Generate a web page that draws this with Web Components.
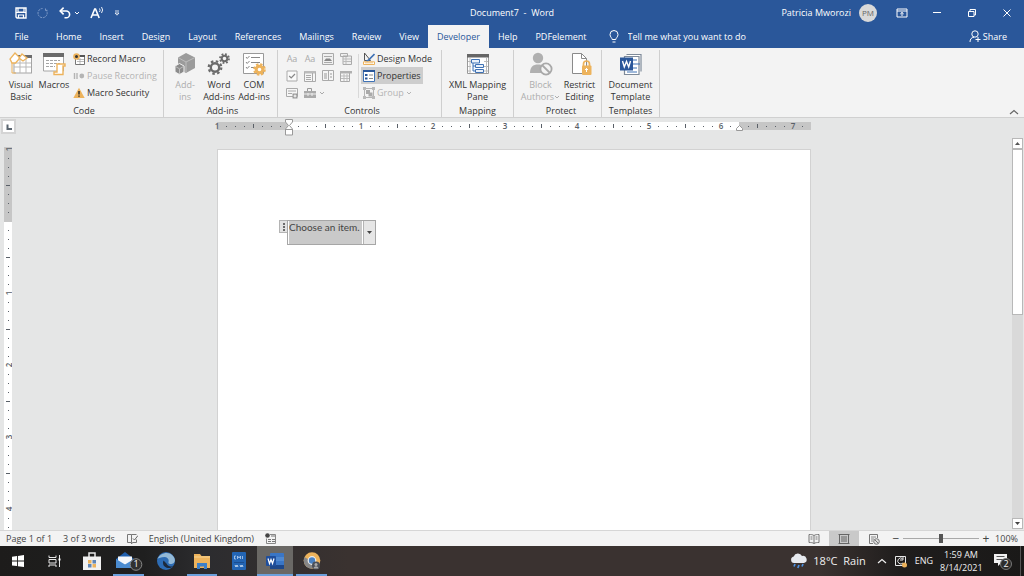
<!DOCTYPE html>
<html lang="en">
<head>
<meta charset="utf-8">
<title>Document7 - Word</title>
<style>
  html, body { height: 100%; }
  body { margin: 0; overflow: hidden; font: 9px/12px "Open Sans", "Noto Sans", sans-serif; color: #333; }
</style>
</head>
<body>
<word-app></word-app>

<script>
const O = '#edb35c', B = '#2b579a', G = '#6b6b6b', L = '#b4b4b4', M = '#3f72b5';
const ICONS = {
  save: ['0 0 12 12', `<path d="M1 1h10v10H2L1 10z" fill="none" stroke="#fff" stroke-width="1.4"/><path d="M3 1v4h6V1M3.5 11V8h5v3" fill="none" stroke="#fff" stroke-width="1.2"/><path d="M1 5.5h10" stroke="#fff"/>`],
  redo: ['0 0 12 12', `<path d="M8.500 3.500V1M8.500 3.300H11M8.800 2.800A4.600 4.600 0 1 1 5.500 1.500" fill="none" stroke="#7f9bc8" stroke-dasharray="2 .8"/>`],
  undo: ['0 0 12 12', `<path d="M1 4h6.2a3.4 3.4 0 0 1 0 6.8H5.5" fill="none" stroke="#fff" stroke-width="1.6"/><path d="M4.6.6L1.2 4l3.4 3.4" fill="none" stroke="#fff" stroke-width="1.6"/>`],
  caret: ['0 0 6 6', `<path d="M1 2l2 2 2-2" fill="none" stroke="currentColor"/>`],
  readaloud: ['0 0 14 13', `<path d="M1 12L4.7 3h.8L9.2 12M2.5 9h5" fill="none" stroke="#fff" stroke-width="1.6"/><path d="M9.5 2.5a3 3 0 0 1 0 3.5M11.5 1a5 5 0 0 1 0 6" fill="none" stroke="#fff" stroke-width=".9"/>`],
  customise: ['0 0 6 6', `<path d="M1 1h4M1 3h4L3 5.2z" stroke="#fff" stroke-width=".8" fill="none"/>`],
  ribbonopts: ['0 0 12 10', `<path d="M1 1h10v8H1zM1 3h10M6 8V4.5M4.3 6L6 4.4 7.700 6" fill="none" stroke="#fff"/>`],
  minimise: ['0 0 10 10', `<path d="M1 4.500h8" stroke="#fff"/>`],
  restore: ['0 0 10 10', `<path d="M1.5 3.500h5.500v5H1.500zM3 3.500v-2h5.500v5.500H7" fill="none" stroke="#fff"/>`],
  close: ['0 0 10 10', `<path d="M1.500 1.500l7 7M8.500 1.500l-7 7" stroke="#fff"/>`],
  bulb: ['0 0 10 13', `<path d="M3.200 9.500C3.200 8 1 7 1 4.500a4 4 0 0 1 8 0C9 7 6.800 8 6.800 9.500zM3.500 12h3" fill="none" stroke="#fff"/>`],
  share: ['0 0 12 13', `<circle cx="6" cy="4" r="3.200" fill="none" stroke="#fff"/><path d="M1 12c0-3 1.500-4.500 4-4.800M9 7v5M6.500 9.500h5" fill="none" stroke="#fff"/>`],
  vb: ['0 0 24 24', `<rect x="5" y="4" width="17.500" height="17" fill="#fff" stroke="#a5a5a5"/><path d="M5 3h18v3H5z" fill="${G}"/><path d="M5 11h17M5 15h17M11 6v15M17 6v15" stroke="#b9b9b9"/><path d="M6 1l5 5-4.500 5H3L1 7z" fill="#fff" stroke="${O}" stroke-width="1.300"/><path d="M13 2l5 4-4 3-4-3z" fill="#fff" stroke="${O}" stroke-width="1.300"/><path d="M3 11v10h4" fill="none" stroke="${O}"/>`],
  macros: ['0 0 24 24', `<path d="M1.500 2.500h20V19h-20z" fill="#fff" stroke="#a5a5a5"/><path d="M1 1h21v4H1z" fill="${G}"/><path d="M4 8.500h14M4 11.500h14M4 14.500h9" stroke="#a5a5a5" stroke-dasharray="3 1"/><path d="M15 12h8v2h-2v8.500h-9V20h3z" fill="#fff" stroke="${O}" stroke-width="1.400"/>`],
  record: ['0 0 12 12', `<path d="M2.500 2.500h9v9h-9z" fill="#fff" stroke="#777"/><path d="M6 2h6v2H6z" fill="#555"/><path d="M4 6.500h7M4 8.500h7M7 5v6" stroke="#aaa" stroke-width=".8"/><circle cx="3.500" cy="3.500" r="3.300" fill="${O}"/><circle cx="3.500" cy="3.500" r="1.500" fill="#333"/>`],
  pause: ['0 0 12 12', `<path d="M1.500 3v6M4 3v6" stroke="${L}" stroke-width="1.400"/><circle cx="8.800" cy="6" r="2.400" fill="${L}"/>`],
  warn: ['0 0 12 12', `<path d="M6 .8L11.700 11H.3z" fill="${O}"/><path d="M6 4v3.500M6 8.500v1.300" stroke="#222" stroke-width="1.400"/>`],
  addins: ['0 0 24 24', `<path d="M13 1l9 4.500v10.500L13 21l-8-4.500V5.500z" fill="#9b9b9b"/><path d="M5 5.500l8 4.500 9-4.500M13 10v10" stroke="#bdbdbd" fill="none"/><path d="M6.500 11.500l4.500 2.500v6L6.500 22.500 2 20v-6z" fill="#8b8b8b" stroke="#f3f3f3"/><path d="M2.500 14.500l4 2.300 4-2.300M6.500 17V22" stroke="#bdbdbd" fill="none"/>`],
  gears: ['0 0 24 24', `<g fill="none" stroke="${G}"><circle cx="8" cy="15.500" r="4.200" stroke-width="2.400"/><circle cx="8" cy="15.500" r="6.300" stroke-width="2.200" stroke-dasharray="2.500 2.448"/><circle cx="17.500" cy="6.500" r="2.800" stroke-width="2"/><circle cx="17.500" cy="6.500" r="4.500" stroke-width="1.800" stroke-dasharray="1.800 1.734"/></g>`],
  com: ['0 0 24 24', `<path d="M1.500 1.500h20v20h-20z" fill="#fff" stroke="#999"/><path d="M9 5.500h9M9 10.500h9M9 15.500h5" stroke="#888"/><path d="M4 5l1.200 1.500L7.500 4M4 10l1.200 1.500L7.500 9M4 15l1.200 1.500L7.500 14" fill="none" stroke="#888"/><circle cx="17.500" cy="17.500" r="3.300" fill="none" stroke="${O}" stroke-width="3"/><circle cx="17.500" cy="17.500" r="5.200" fill="none" stroke="${O}" stroke-width="2.200" stroke-dasharray="2.400 1.684"/>`],
  picture: ['0 0 12 12', `<path d="M.5.500h11v11H.5z" fill="#f0f0f0" stroke="#aaa"/><path d="M2 3.500h8" stroke="#aaa"/><path d="M2 8l2-2.500h4L10 8z" fill="#888"/><path d="M2 9.500h8" stroke="#aaa"/>`],
  block: ['0 0 12 12', `<path d="M.5.500h7v3h-7zM3 3h8.500v8.500H3z" fill="#eee" stroke="#aaa"/><path d="M3 6h8M3 8.500h8M6 4v7" stroke="#bbb"/>`],
  check: ['0 0 12 12', `<path d="M1 1h10v10H1z" fill="#fafafa" stroke="#aaa"/><path d="M3.200 6l2 2 3.800-4" fill="none" stroke="#888" stroke-width="1.200"/>`],
  combo: ['0 0 12 12', `<path d="M.5 1.500h11v10H.5z" fill="#f6f6f6" stroke="#aaa"/><path d="M.5 1h11v2.500H.5z" fill="#bbb"/><path d="M2 5.500h5M2 7.500h5M2 9.500h5M8.500 3v8" stroke="#aaa"/>`],
  list: ['0 0 12 12', `<path d="M.5.500h11v10H.5zM6.500 1v10" fill="#f6f6f6" stroke="#aaa"/><path d="M2 4h3M2 6h3M2 8h3M8 4h2M8 7h2" stroke="#999"/>`],
  date: ['0 0 12 12', `<path d="M.5 2.500h9v9h-9z" fill="#f6f6f6" stroke="#aaa"/><path d="M0 1h12v2.500H0z" fill="#b0b0b0"/><path d="M1 6h8M1 8.500h8M4 4v7M7 4v7" stroke="#bbb"/>`],
  repeat: ['0 0 12 12', `<path d="M.5 1.500h11v8H.5z" fill="#f6f6f6" stroke="#aaa"/><path d="M2 4h8M2 6.500h4" stroke="#aaa"/><path d="M6.500 6.500h5v5h-5z" fill="#999"/><path d="M9 7.500v3M7.500 9h3" stroke="#fff"/>`],
  legacy: ['0 0 12 12', `<path d="M0 4h12v7H0z" fill="#aaa"/><path d="M3.500 4V1.500h4V4" fill="none" stroke="#999"/><path d="M0 7h12M4 6v3M8 6v3" stroke="#eee"/>`],
  design: ['0 0 12 12', `<path d="M1.500 0v7.500h6z" fill="none" stroke="#555"/><path d="M11.500 1L5 7.500l-1.500.8" stroke="${M}" stroke-width="1.600" fill="none"/><path d="M.5 8.800h11v2.700H.500z" fill="#fff" stroke="${O}"/><path d="M3 9v1.500M5 9v1.500M7 9v1.500M9 9v1.500" stroke="${O}"/>`],
  props: ['0 0 12 12', `<path d="M.5.500h11v11H.500z" fill="#fff" stroke="${M}"/><path d="M0 1h12" stroke="#2b579a" stroke-width="2"/><path d="M2 5h2.500M2 8.500h2.500" stroke="${B}" stroke-width="2"/><path d="M6 5h4M6 8.500h4" stroke="#888"/>`],
  group: ['0 0 12 12', `<path d="M1.500 1.500h9v9h-9z" fill="none" stroke="${L}"/><path d="M3 3h4v4H3zM5.500 5.500h4v4h-4z" fill="#aaa"/><path d="M0 0h3v3H0zM9 0h3v3H9zM0 9h3v3H0zM9 9h3v3H9z" fill="#b9b9b9"/>`],
  xml: ['0 0 24 24', `<path d="M1.500 3.500h21v18h-21z" fill="#fff" stroke="#9a9a9a"/><path d="M1 2h22v3.500H1z" fill="#666"/><path d="M18 9.500h4M18 14.500h4M18 19h4M2 9.500h3M2 14.500h3M2 19h3M4 6v15M20.500 6v15" stroke="#bbb"/><path d="M5.500 7.500h8v3.500h-8zM9.500 12.500h8v3h-8zM9.500 17.500h8v3h-8zM7 11v8h2.500M7 14h2.500" fill="#eaf1fa" stroke="${M}"/>`],
  authors: ['0 0 24 24', `<circle cx="9" cy="6" r="5.200" fill="#b0b0b0"/><path d="M1 21c0-6 3-8.500 8-8.500S17 15 17 21z" fill="#b0b0b0"/><circle cx="17" cy="17" r="5.600" fill="#f3f3f3" stroke="#a8a8a8" stroke-width="1.800"/><path d="M13 13l8 8" stroke="#a8a8a8" stroke-width="1.800"/>`],
  restrict: ['0 0 24 24', `<path d="M4.500 1.500h9l5 5v15h-14z" fill="#fff" stroke="#8a8a8a"/><path d="M13.500 1.500v5h5" fill="none" stroke="#8a8a8a"/><path d="M15.500 14v-2a3 3 0 0 1 6 0v2" fill="none" stroke="${O}" stroke-width="1.700"/><rect x="14" y="13.500" width="9.500" height="9.500" rx="1" fill="${O}"/><path d="M18.500 16v4M17 17.500h3" stroke="#fff"/>`],
  template: ['0 0 24 24', `<path d="M7.500 2.500H22v17M5.500 4.500H20v18H5.500z" fill="#fff" stroke="#7e8a99" stroke-width="1.200"/><path d="M14 8h4M14 12h7M14 16h4M8 20h10" stroke="${M}" stroke-width="1.200"/><path d="M1 5.500h13v13H1z" fill="${B}"/><path d="M3.500 9l1.800 6L7.500 9.500 9.700 15l1.800-6" fill="none" stroke="#fff" stroke-width="1.400"/>`],
  chevup: ['0 0 10 6', `<path d="M1 5l4-3.500L9 5" fill="none" stroke="currentColor" stroke-width="1.200"/>`],
  tab: ['0 0 12 12', `<path d="M4.500 3.500v4.500H9" fill="none" stroke="#5b6670" stroke-width="2"/>`],
  up: ['0 0 7 5', `<path d="M1 4l2.500-3L6 4z" fill="#555"/>`],
  down: ['0 0 7 5', `<path d="M1 1l2.500 3L6 1z" fill="#444"/>`],
  dots: ['0 0 4 10', `<path d="M1 1h2v2H1zM1 4h2v2H1zM1 7h2v2H1z" fill="#6b6b6b"/>`],
  proof: ['0 0 12 12', `<path d="M5.500 1.500h-4v8h4v1.500l1-1.500h4v-3M5.500 1.500v8M5.500 1.500h5" fill="none" stroke="#777"/><path d="M7 5.500l1.500 1.500L12 2.500" fill="none" stroke="#666"/>`],
  macrec: ['0 0 12 12', `<path d="M5 1.500h5.500v9h-9V5.500" fill="none" stroke="#888"/><path d="M6 3h4M3 6.500h3M7 6.500h3M3 8.500h3M7 8.500h3" stroke="#777"/><circle cx="2.500" cy="2.500" r="2.300" fill="#444"/>`],
  read: ['0 0 12 12', `<path d="M6 2.500C4.500 1.500 3 1.500 1 1.500v8c2 0 3.500 0 5 1 1.500-1 3-1 5-1v-8c-2 0-3.500 0-5 1zM6 2.500v8M2.500 4h2M2.500 6h2M7.500 4h2M7.500 6h2" fill="none" stroke="#777"/>`],
  print: ['0 0 12 12', `<path d="M.5 1.500h11M.5 10.500h11M1.500 1v10M10.500 1v10" stroke="#666"/><path d="M3 4h6M3 6h6M3 8h6" stroke="#666"/>`],
  web: ['0 0 12 12', `<path d="M9.500 5V1.500h-8v9H5" fill="none" stroke="#777"/><path d="M3 4h5M3 6h3M3 8h2" stroke="#888"/><circle cx="8.500" cy="8.500" r="2.800" fill="#ddd" stroke="#777"/><path d="M7 7l3 3" stroke="#777"/>`],
  windows: ['0 0 14 14', `<path d="M1 2.700l5-.7v4.600H1zM6.900 1.900L13 1v5.600H6.900zM1 7.500h5v4.600l-5-.7zM6.900 7.500H13V13l-6.100-.8z" fill="#fff"/>`],
  taskview: ['0 0 14 14', `<path d="M1 1.500v2h7v-2M1 5.500h7v3.500H1zM1 13v-2h7v2" fill="none" stroke="#e8e8e8"/><path d="M11.500 1v12" stroke="#e8e8e8"/><path d="M10.500 4.500h2v2h-2z" fill="#fff"/>`],
  store: ['0 0 20 20', `<path d="M7 6V2h6v4" fill="none" stroke="#e8e8e8" stroke-width="1.500"/><path d="M1 5.500h18V19H1z" fill="#f1f1f1"/><path d="M6 9h3.500v3.500H6zM10.500 13h3.500v3.500h-3.500z" fill="${O}"/><path d="M10.500 9H14v3.500h-3.500zM6 13h3.500v3.500H6z" fill="#5f86b8"/>`],
  mail: ['0 0 28 22', `<path d="M1 9L10 2l9 7v9H1z" fill="#1f5fae"/><path d="M3 6.500h14v6L10 15l-7-3z" fill="#f4f7fb"/><path d="M1 9l9 5.500L19 9v9H1z" fill="#4a8bd0"/><circle cx="21" cy="14.500" r="5.800" fill="#30302f" stroke="#888"/>`],
  edge: ['0 0 20 20', `<circle cx="10" cy="10" r="9" fill="#2d6cb4"/><path d="M1.500 8C4 2 13-.5 17.500 5.500 20 9 19 12.500 15.500 13c-2 .3-3.500-.5-3-2 .8-2.500-1-5-4-5C5 6 2.500 7 1.500 8z" fill="#93b9d6"/><path d="M7.500 9.500c-1.500 3.500.5 7 4.500 7.500 2 .3 4-.5 5.500-1.500-2 .3-6 0-7-3z" fill="#1d2a3c"/>`],
  folder: ['0 0 20 20', `<path d="M2 3h6l1.500 2H18v12H2z" fill="${O}"/><path d="M2 6h16" stroke="#f7d493"/><path d="M5 18v-6h10v6h-3v-2.500H8V18z" fill="#3c7fc9"/>`],
  cmapp: ['0 0 16 20', `<rect x="1" y="1" width="14" height="18" rx="1" fill="#2365b4"/><path d="M5 5H3.500v3H5M6.500 8V5L8 7l1.500-2v3M11.500 5v3" fill="none" stroke="#b9d2f0" stroke-width=".8"/><path d="M3 11.500h10" stroke="#1a4e92"/><path d="M4 14l1 2 1-2 1 2M9 14l1 2 1-2 1 2" fill="none" stroke="#d5e4f6" stroke-width=".9"/>`],
  wordapp: ['0 0 20 20', `<rect x="5" y="2" width="14" height="16" rx="1" fill="#3a76c6"/><path d="M5 6h14v4H5z" fill="#4f88d0"/><path d="M5 14h14v4H5z" fill="#1d478a"/><rect x="1" y="5" width="10" height="10" rx="1" fill="#1f4e9c"/><path d="M3 7.500L4.500 12.500 6 8.500l1.500 4L9 7.500" fill="none" stroke="#fff" stroke-width="1.200"/>`],
  chrome: ['0 0 20 20', `<circle cx="10" cy="9.500" r="8.300" fill="${O}"/><path d="M2.500 6A8.300 8.300 0 0 0 10 17.800l3-5z" fill="#868686"/><circle cx="10" cy="9.500" r="3.800" fill="#4a82c3" stroke="#eee" stroke-width="1.200"/><circle cx="14" cy="14.500" r="4" fill="#4a4f58"/><circle cx="14" cy="13.500" r="1.500" fill="#aaa"/><path d="M11.500 17.500c.5-3 4.500-3 5 0z" fill="#aaa"/>`],
  rain: ['0 0 18 18', `<path d="M4 11a3.300 3.300 0 0 1-.3-6.500A4.500 4.500 0 0 1 12 4a3.500 3.500 0 0 1 2 7z" fill="#e6e9ee"/><path d="M5 12l-1 2.500M9 13l-1.200 3M13 12l-1 2.500" stroke="#4a90e2" stroke-width="1.700"/>`],
  tray: ['0 0 14 14', `<path d="M1.500 2.500h10v9h-10z" fill="none" stroke="#e8e8e8"/><path d="M8.500 4.500A3 3 0 1 0 9 9M9 3v3H6" fill="none" stroke="#e8e8e8"/><circle cx="10.500" cy="11" r="2.500" fill="${O}"/>`],
  notify: ['0 0 20 20', `<path d="M1 3h13v9H8l-3 3v-3H1z" fill="#f2f2f2"/><path d="M3.500 5.500h8M3.500 8.500h8" stroke="#555"/><circle cx="13" cy="13" r="5.500" fill="#2d2c2b" stroke="#777"/>`]
};

const define = (name, css, html, setup) => customElements.define(name, class extends HTMLElement {
  constructor() {
    super();
    this.attachShadow({ mode: 'open' });
  }
  connectedCallback() {
    if (this.ready) return;
    this.ready = true;
    const t = document.createElement('template');
    t.innerHTML = `<style>*{box-sizing:border-box}button,input,select{font:inherit;color:inherit;margin:0;border:0;background:none;padding:0}${css}</style>` +
      (typeof html === 'function' ? html(this) : html);
    this.shadowRoot.append(t.content.cloneNode(true));
    if (setup) setup(this);
  }
});
const at = (el, n, d = '') => el.getAttribute(n) ?? d;

define('ui-icon', `:host{display:block;flex:none} svg{display:block}`, el => {
  const [box, body] = ICONS[at(el, 'name')];
  const [, , w, h] = box.split(' ');
  return `<svg width="${w}" height="${h}" viewBox="${box}" aria-hidden="true">${body}</svg>`;
});

define('title-bar', `
  :host{display:grid;grid-template-columns:1fr auto 1fr;align-items:center;height:25px;background:#2a579a;color:#fff}
  .quick,.right{display:flex;align-items:center}
  .quick{padding-left:15px;gap:10px}
  .quick button{display:flex;align-items:center;gap:3px}
  .right{justify-content:flex-end}
  .avatar{width:18px;height:18px;margin:0 7px 0 8px;border-radius:50%;background:#d9d9d9;color:#666;font-size:8px;line-height:18px;text-align:center}
  .win{width:35px;height:24px;display:grid;place-items:center}
`, `
  <div class="quick">
    <button aria-label="Save"><ui-icon name="save"></ui-icon></button>
    <button aria-label="Redo"><ui-icon name="redo"></ui-icon></button>
    <button aria-label="Undo"><ui-icon name="undo"></ui-icon><ui-icon name="caret"></ui-icon></button>
    <button aria-label="Read aloud"><ui-icon name="readaloud"></ui-icon></button>
    <button aria-label="Customise toolbar"><ui-icon name="customise"></ui-icon></button>
  </div>
  <span>Document7&nbsp; -&nbsp; Word</span>
  <div class="right">
    <span>Patricia Mworozi</span><span class="avatar">PM</span>
    <button class="win" aria-label="Ribbon options"><ui-icon name="ribbonopts"></ui-icon></button>
    <button class="win" aria-label="Minimise"><ui-icon name="minimise"></ui-icon></button>
    <button class="win" aria-label="Restore"><ui-icon name="restore"></ui-icon></button>
    <button class="win" aria-label="Close"><ui-icon name="close"></ui-icon></button>
  </div>
`);

define('ribbon-tabs', `
  :host{display:flex;height:23px;background:#2a579a;color:#fff}
  nav{display:flex}
  button{padding:0 9px;white-space:nowrap}
  .file{width:47px;padding:0 4px 0 0}
  .on{background:#f3f3f3;color:#2a579a}
  label{display:flex;align-items:center;gap:9px;margin-left:13px}
  input{width:160px;outline:0}
  input::placeholder{color:#fff;opacity:1}
  .share{display:flex;align-items:center;gap:2px;margin-left:auto;padding:0 17px 0 0}
`, `
  <nav role="tablist">
    <button class="file">File</button>
    ${['Home', 'Insert', 'Design', 'Layout', 'References', 'Mailings', 'Review', 'View', 'Developer', 'Help', 'PDFelement']
      .map(t => `<button role="tab"${t === 'Developer' ? ' class="on" aria-selected="true"' : ''}>${t}</button>`).join('')}
  </nav>
  <label><ui-icon name="bulb"></ui-icon><input aria-label="Tell me what you want to do" placeholder="Tell me what you want to do"></label>
  <button class="share"><ui-icon name="share"></ui-icon>Share</button>
`);

define('ribbon-group', `
  :host{display:flex;flex-direction:column;flex:none;border-right:1px solid #cfcfcf;margin-top:2px}
  .body{display:flex;flex:1}
  .name{text-align:center;line-height:12px}
`, el => `<div class="body"><slot></slot></div><div class="name">${at(el, 'label')}</div>`);

define('large-button', `
  :host{display:block;flex:none}
  :host([disabled]){color:#adadad}
  button{display:flex;flex-direction:column;align-items:center;gap:3px;width:100%;padding-top:2px}
  .txt{white-space:pre;text-align:center}
  .txt ui-icon{display:inline-block}
`, el => `<button${el.hasAttribute('disabled') ? ' disabled' : ''}><ui-icon name="${at(el, 'icon')}"></ui-icon><span class="txt"><slot></slot>${el.hasAttribute('menu') ? '<ui-icon name="caret"></ui-icon>' : ''}</span></button>`);

define('small-button', `
  :host{display:block}
  :host([disabled]){color:#b4b4b4}
  button{display:flex;align-items:center;gap:2px;height:17px;padding:0 2px;white-space:nowrap}
  :host([pressed]) button{background:#cdcdcd}
`, el => `<button${el.hasAttribute('disabled') ? ' disabled' : ''}><ui-icon name="${at(el, 'icon')}"></ui-icon><slot></slot>${el.hasAttribute('menu') ? '<ui-icon name="caret"></ui-icon>' : ''}</button>`);

define('ribbon-panel', `
  :host{display:flex;height:70px;background:#f3f3f3;border-bottom:1px solid #d0d0d0;color:#333}
  .w32{width:32px}.w34{width:34px}.w36{width:36px}.w39{width:39px}
  .code{width:164px;padding-left:5px}.addins{width:114px;padding-left:4px}.controls{width:164px;padding-left:5px}
  .mapping{width:72px}.protect{width:88px;padding-left:7px}.templates{width:58px}
  .fill{flex:1}
  .grid{display:grid;grid-template-columns:repeat(4,18px);grid-auto-rows:17px;color:#aaa}
  .grid button{display:flex;align-items:center;justify-content:center}
  .grid button:last-child{justify-content:flex-start}
  .rule{width:1px;height:44px;margin:4px 2px 0 3px;background:#d8d8d8}
  .collapse{margin:auto 5px 2px auto;color:#666}
`, `
  <ribbon-group class="code" label="Code">
    <large-button class="w32" icon="vb">Visual<br>Basic</large-button>
    <large-button class="w34" icon="macros">Macros</large-button>
    <div>
      <small-button icon="record">Record Macro</small-button>
      <small-button icon="pause" disabled>Pause Recording</small-button>
      <small-button icon="warn">Macro Security</small-button>
    </div>
  </ribbon-group>
  <ribbon-group class="addins" label="Add-ins">
    <large-button class="w34" icon="addins" disabled>Add-<br>ins</large-button>
    <large-button class="w34" icon="gears">Word<br>Add-ins</large-button>
    <large-button class="w36" icon="com">COM<br>Add-ins</large-button>
  </ribbon-group>
  <ribbon-group class="controls" label="Controls">
    <div class="grid">
      <button>Aa</button><button>Aa</button>
      <button aria-label="Picture"><ui-icon name="picture"></ui-icon></button>
      <button aria-label="Building block"><ui-icon name="block"></ui-icon></button>
      <button aria-label="Check box"><ui-icon name="check"></ui-icon></button>
      <button aria-label="Combo box"><ui-icon name="combo"></ui-icon></button>
      <button aria-label="Drop-down list"><ui-icon name="list"></ui-icon></button>
      <button aria-label="Date picker"><ui-icon name="date"></ui-icon></button>
      <button aria-label="Repeating section"><ui-icon name="repeat"></ui-icon></button>
      <button aria-label="Legacy tools"><ui-icon name="legacy"></ui-icon></button>
      <button aria-label="Legacy tools menu"><ui-icon name="caret"></ui-icon></button>
    </div>
    <div class="rule"></div>
    <div>
      <small-button icon="design">Design Mode</small-button>
      <small-button icon="props" pressed>Properties</small-button>
      <small-button icon="group" disabled menu>Group</small-button>
    </div>
  </ribbon-group>
  <ribbon-group class="mapping" label="Mapping">
    <large-button class="fill" icon="xml">XML Mapping<br>Pane</large-button>
  </ribbon-group>
  <ribbon-group class="protect" label="Protect">
    <large-button class="w39" icon="authors" disabled menu>Block<br>Authors</large-button>
    <large-button class="w39" icon="restrict">Restrict<br>Editing</large-button>
  </ribbon-group>
  <ribbon-group class="templates" label="Templates">
    <large-button class="fill" icon="template">Document<br>Template</large-button>
  </ribbon-group>
  <ui-icon class="collapse" name="chevup"></ui-icon>
`);

/* Ruler scale: 72px per inch, one mark every eighth of an inch. */
const STEP = 9;
const scale = (length, zero, vertical) => {
  let out = '';
  for (let k = Math.ceil(-zero / STEP); zero + k * STEP < length - 1; k++) {
    if (k === 0) continue;
    const p = zero + k * STEP;
    if (k % 8 === 0) {
      out += vertical
        ? `<text x="4" y="${p}" text-anchor="middle" dominant-baseline="central" transform="rotate(-90 4 ${p})">${Math.abs(k / 8)}</text>`
        : `<text x="${p}" y="7" text-anchor="middle">${Math.abs(k / 8)}</text>`;
    } else {
      const s = k % 4 === 0 ? 4 : 1;
      const a = s === 4 ? 2 : 4;
      out += vertical ? `<rect x="${a}" y="${p}" width="${s}" height="1"/>` : `<rect x="${p}" y="${a}" width="1" height="${s}"/>`;
    }
  }
  return out;
};

define('h-ruler', `
  :host{display:block;position:relative;width:594px;height:8px;background:linear-gradient(90deg,#c6c6c6 72px,#fff 72px 522px,#c6c6c6 522px)}
  svg{display:block;width:100%;height:8px;overflow:visible;fill:#5a6068;font-size:8px;font-weight:600}
  .mark{fill:#fff;stroke:#999}
`, `<svg>${scale(594, 72, false)}
  <path class="mark" d="M68.500-2.500h7v2.500l-3 3.500 3 3.500v6h-7v-6l3-3.500-3-3.500zM68.500 7.500h7"/>
  <path class="mark" d="M519.500 8.500v-2l3-3 3 3v2z"/></svg>`);

define('v-ruler', `
  :host{display:block;width:8px;margin:13px 0 0 4px;overflow:hidden;background:linear-gradient(#c6c6c6 75px,#fff 75px)}
  svg{display:block;width:8px;height:0;fill:#5a6068;font-size:8px;font-weight:600}
`, `<svg></svg>`, el => {
  const svg = el.shadowRoot.querySelector('svg');
  new ResizeObserver(() => {
    svg.style.height = el.clientHeight + 'px';
    svg.innerHTML = scale(el.clientHeight, 74, true);
  }).observe(el);
});

define('scroll-bar', `
  :host{display:flex;flex-direction:column;width:11px;margin:4px 0 1px;background:#d9d9d9}
  button{height:11px;flex:none;display:grid;place-items:center;background:#fff;border:1px solid #b8b8b8}
  .track{flex:1}
  .thumb{height:45%;background:#fff;border:1px solid #b8b8b8}
`, `<button aria-label="Scroll up"><ui-icon name="up"></ui-icon></button>
  <div class="track"><div class="thumb"></div></div>
  <button aria-label="Scroll down"><ui-icon name="down"></ui-icon></button>`);

define('content-control', `
  :host{display:flex;align-items:flex-start;color:#444}
  .handle{display:grid;place-items:center;width:8px;height:13px;background:#e3e3e3;border:1px solid #b4b4b4;border-right:0}
  .box{display:grid;grid-template-columns:75px 12px;height:25px;border:1px solid #a6a6a6;background:#fff}
  select{grid-area:1/1/2/3;appearance:none;width:100%;height:23px;padding:0 12px 10px 1px;outline:0;font-family:Lato,sans-serif;font-size:10px;line-height:13px;
    background:linear-gradient(90deg,#fff 1px,#c9c9c9 1px 74px,#fff 74px)}
  .arrow{grid-area:1/2;display:grid;place-items:center;background:#e6e6e6;border-left:1px solid #b4b4b4;pointer-events:none}
`, `<span class="handle"><ui-icon name="dots"></ui-icon></span>
  <div class="box"><select aria-label="Drop-down content control"><option>Choose an item.</option></select>
  <span class="arrow"><ui-icon name="down"></ui-icon></span></div>`);

define('doc-workspace', `
  :host{display:grid;grid-template:16px 1fr/16px 1fr 11px;min-height:0;padding-right:1px;background:#e5e6e6}
  .sel{display:grid;place-items:center;margin:1px 0 0 1px;width:15px;height:15px;border:2px solid #d4d4d4;background:#fff}
  h-ruler{justify-self:center;margin-top:4px}
  .page{justify-self:center;width:594px;margin-top:15px;padding:70px 0 0 61px;background:#fff;border:1px solid #d2d2d2;border-bottom:0}
`, `<span class="sel"><ui-icon name="tab"></ui-icon></span><h-ruler></h-ruler><span></span>
  <v-ruler></v-ruler><main class="page"><content-control></content-control></main><scroll-bar></scroll-bar>`);

define('status-bar', `
  :host{display:flex;align-items:center;height:16px;padding:0 6px;background:#f3f3f3;border-top:1px solid #d6d6d6;color:#444}
  .left,.right{display:flex;align-items:center}
  .left{gap:11px}
  .right{margin-left:auto}
  .view{width:30px;height:15px;display:grid;place-items:center}
  .on{background:#c9c9c9}
  .zoom{width:14px;text-align:center;font-size:12px}
  input{appearance:none;width:76px;height:9px;background:linear-gradient(#a9a9a9,#a9a9a9) center/100% 1px no-repeat}
  input::-webkit-slider-thumb{appearance:none;width:4px;height:9px;background:#555}
  output{width:25px;text-align:right}
`, `<div class="left"><span>Page 1 of 1</span><span>3 of 3 words</span><ui-icon name="proof"></ui-icon><span>English (United Kingdom)</span><ui-icon name="macrec"></ui-icon></div>
  <div class="right">
    <button class="view" aria-label="Read mode"><ui-icon name="read"></ui-icon></button>
    <button class="view on" aria-label="Print layout"><ui-icon name="print"></ui-icon></button>
    <button class="view" aria-label="Web layout"><ui-icon name="web"></ui-icon></button>
    <button class="zoom" aria-label="Zoom out">−</button>
    <input type="range" aria-label="Zoom" min="0" max="200" value="100">
    <button class="zoom" aria-label="Zoom in">+</button>
    <output>100%</output>
  </div>`);

define('task-item', `
  :host{display:block;width:36px;height:30px}
  :host([wide]){width:37px}
  button{position:relative;display:grid;place-items:center;width:100%;height:100%}
  :host([open]) button::after{content:"";position:absolute;left:3px;right:3px;bottom:0;height:2px;background:#6ba0dc}
  :host([active]) button{background:#6a6865}
  :host([active]) button::after{left:0;right:0}
  .badge{position:absolute;left:20px;top:12px;width:12px;text-align:center;color:#fff}
`, el => `<button aria-label="${at(el, 'label')}"><ui-icon name="${at(el, 'icon')}"></ui-icon>${at(el, 'badge') ? `<span class="badge">${at(el, 'badge')}</span>` : ''}</button>`);

define('task-bar', `
  :host{display:flex;justify-content:space-between;height:30px;color:#f0f0f0;
    background:linear-gradient(90deg,#1d1c1b 0,#1f1f1f 14%,#2c2c2f 20%,#3a3230 34%,#3a3230 80%,#1f1d1c 88%,#1a1918)}
  .apps,.tray{display:flex;align-items:center}
  .weather{display:flex;align-items:center;gap:5px;font-size:11px;margin-right:11px}
  .clock{width:42px;margin:0 11px 0 7px;text-align:center;line-height:13px}
  .tray>ui-icon{margin-right:7px}
  .alerts{position:relative;margin-right:7px}
  .alerts span{position:absolute;left:8px;top:7px;width:10px;text-align:center}
  .peek{width:1px;height:30px;margin-right:3px;background:#555}
`, `<div class="apps">
    <task-item icon="windows" label="Start"></task-item><task-item wide icon="taskview" label="Task view"></task-item>
    <task-item wide icon="store" label="Store"></task-item><task-item wide icon="mail" label="Mail" badge="1" open></task-item>
    <task-item wide icon="edge" label="Edge"></task-item><task-item icon="folder" label="File Explorer" open></task-item>
    <task-item wide icon="cmapp" label="Notes"></task-item><task-item icon="wordapp" label="Word" open active></task-item>
    <task-item wide icon="chrome" label="Chrome" open></task-item>
  </div>
  <div class="tray">
    <span class="weather"><ui-icon name="rain"></ui-icon><span>18°C&nbsp; Rain</span></span>
    <ui-icon name="chevup"></ui-icon><ui-icon name="tray"></ui-icon><span>ENG</span>
    <div class="clock">1:59 AM<br>8/14/2021</div>
    <button class="alerts" aria-label="Notifications"><ui-icon name="notify"></ui-icon><span>2</span></button>
    <span class="peek"></span>
  </div>`);

define('word-app', `
  :host{display:grid;grid-template-rows:auto auto auto 1fr auto auto;height:100vh;background:#e5e6e6}
`, `<title-bar></title-bar><ribbon-tabs></ribbon-tabs><ribbon-panel></ribbon-panel><doc-workspace></doc-workspace><status-bar></status-bar><task-bar></task-bar>`);
</script>
</body>
</html>
